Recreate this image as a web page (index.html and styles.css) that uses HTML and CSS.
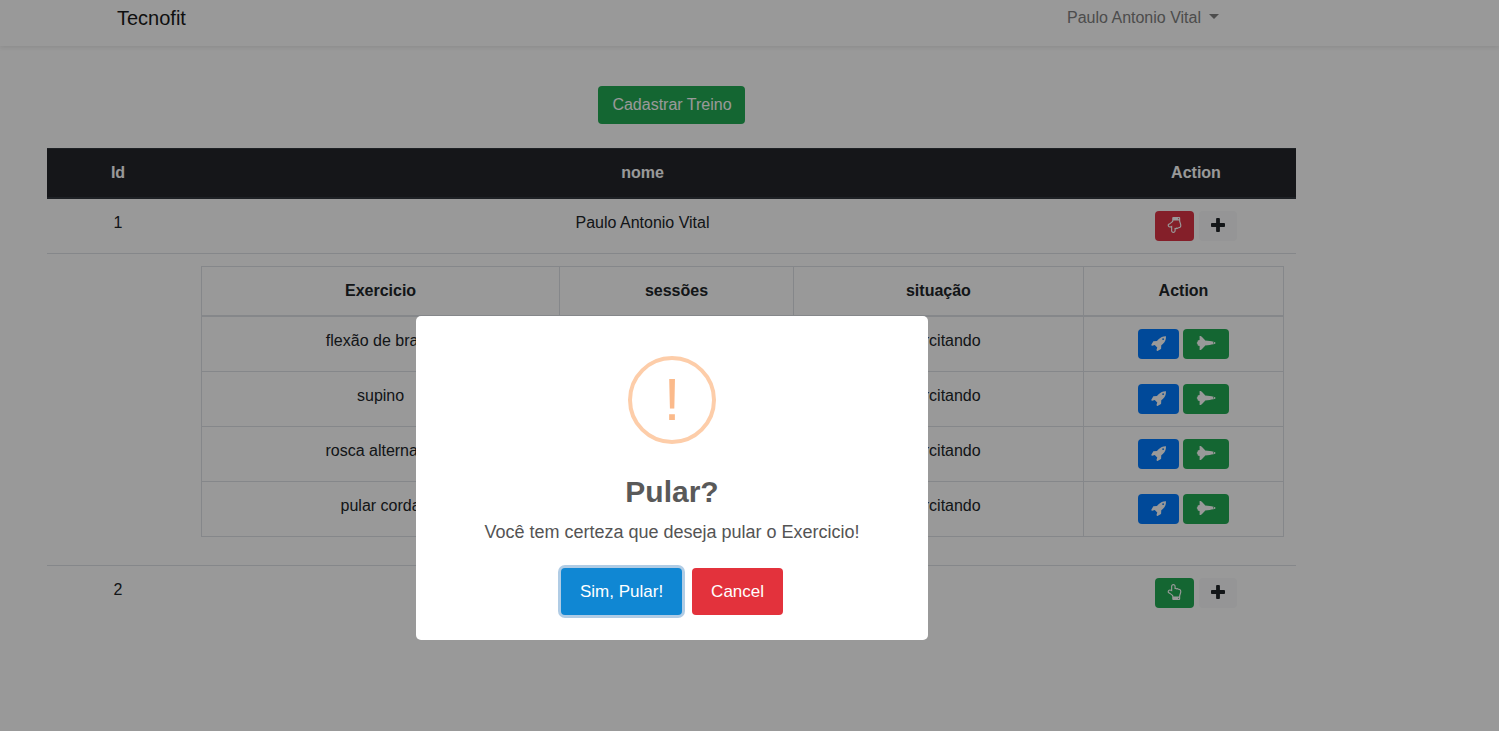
FILE: index.html
```html
<!DOCTYPE html>
<html lang="pt-BR">
<head>
<meta charset="utf-8">
<meta name="viewport" content="width=device-width, initial-scale=1">
<title>Tecnofit</title>
<link rel="stylesheet" href="styles.css">
</head>
<body>
<svg class="sprite" aria-hidden="true">
  <symbol id="plus" viewBox="0 0 1408 1408"><path d="M1408 608v192q0 40-28 68t-68 28H896v416q0 40-28 68t-68 28H608q-40 0-68-28t-28-68V896H96q-40 0-68-28T0 800V608q0-40 28-68t68-28h416V96q0-40 28-68t68-28h192q40 0 68 28t28 68v416h416q40 0 68 28t28 68z"/></symbol>
  <symbol id="hand" viewBox="128 0 1536 1792"><path d="M1408 1600q0-26-19-45t-45-19-45 19-19 45 19 45 45 19 45-19 19-45zm128-764q0-189-167-189-26 0-56 5-16-30-52.500-47.500t-73.500-17.500-69 18q-50-53-119-53-25 0-55.500 10t-47.500 25v-331q0-52-38-90t-90-38q-51 0-89.500 39t-38.500 89v576q-20 0-48.500-15t-55-33-68-33-84.500-15q-67 0-97.500 44.500t-30.500 115.500q0 24 139 90 44 24 65 37 64 40 145 112 81 71 106 101 57 69 57 140v32h640v-32q0-72 32-167t64-193.500 32-179.500zm128-5q0 133-69 322-59 164-59 223v288q0 53-37.500 90.500t-90.500 37.500h-640q-53 0-90.500-37.500t-37.500-90.500v-288q0-10-4.500-21.500t-14-23.500-18-22.500-22.500-24-21.500-20.500-21.500-19-17-14q-74-65-129-100-21-13-62-33t-72-37-63-40.500-49.500-55-17.500-69.500q0-125 67-206.500t189-81.500q68 0 128 22v-374q0-104 76-180t179-76q105 0 181 75.500t76 180.500v169q62 4 119 37 21-3 43-3 101 0 178 60 139-1 219.500 85t80.500 227z"/></symbol>
  <symbol id="rocket" viewBox="0 96 1664 1664"><path d="M1440 448q0-40-28-68t-68-28-68 28-28 68 28 68 68 28 68-28 28-68zm224-288q0 249-75.500 430.500t-253.500 360.500q-81 80-195 176l-20 379q-2 16-16 26l-384 224q-7 4-16 4-12 0-23-9l-64-64q-13-14-8-32l85-276-281-281-276 85q-3 1-9 1-14 0-23-9l-64-64q-17-19-5-39l224-384q10-14 26-16l379-20q96-114 176-195 188-187 358-258t431-71q14 0 24 9.500t10 22.500z"/></symbol>
  <symbol id="shuttle" viewBox="0 0 20 14"><path d="M3.600 0h1.200c1.800 1.200 3.200 3 4.400 4.500 3.400.4 6 .7 8.200 1.200 1.400.3 2.200.8 2.200 1.300s-.8 1-2.200 1.300c-2.200.5-4.800.8-8.200 1.200C8 11 6.600 12.800 4.800 14H3.600V9.900L1.800 9.600 1.500 8 .6 7l.9-1 .3-1.600 1.800-.3zM17 6.300v1.400c.8-.1 1.100-.4 1.100-.7s-.3-.6-1.100-.7z" fill-rule="evenodd"/></symbol>
</svg>

<nav class="navbar">
  <div class="navbar-inner">
    <a class="brand" href="#">Tecnofit</a>
    <a class="user" href="#">Paulo Antonio Vital<span class="caret"></span></a>
  </div>
</nav>

<main class="content">
  <button class="btn btn-success" type="button">Cadastrar Treino</button>
  <table class="table workouts">
    <thead>
      <tr><th class="col-id">Id</th><th>nome</th><th class="col-action">Action</th></tr>
    </thead>
    <tbody>
      <tr>
        <td>1</td>
        <td>Paulo Antonio Vital</td>
        <td><div class="actions wide">
          <button class="btn-icon danger" type="button" aria-label="Desativar"><svg class="hand down"><use href="#hand"/></svg></button>
          <button class="btn-icon light" type="button" aria-label="Adicionar"><svg class="plus"><use href="#plus"/></svg></button>
        </div></td>
      </tr>
      <tr>
        <td></td>
        <td colspan="2">
          <table class="table exercises">
            <thead>
              <tr><th class="col-exercise">Exercicio</th><th class="col-sessions">sessões</th><th>situação</th><th class="col-action">Action</th></tr>
            </thead>
            <tbody>
              <tr><td>flexão de braço</td><td></td><td>Exercitando</td><td><div class="actions"><button class="btn-icon primary" type="button" aria-label="Finalizar"><svg class="rocket"><use href="#rocket"/></svg></button><button class="btn-icon success" type="button" aria-label="Pular"><svg class="shuttle"><use href="#shuttle"/></svg></button></div></td></tr>
              <tr><td>supino</td><td></td><td>Exercitando</td><td><div class="actions"><button class="btn-icon primary" type="button" aria-label="Finalizar"><svg class="rocket"><use href="#rocket"/></svg></button><button class="btn-icon success" type="button" aria-label="Pular"><svg class="shuttle"><use href="#shuttle"/></svg></button></div></td></tr>
              <tr><td>rosca alternada</td><td></td><td>Exercitando</td><td><div class="actions"><button class="btn-icon primary" type="button" aria-label="Finalizar"><svg class="rocket"><use href="#rocket"/></svg></button><button class="btn-icon success" type="button" aria-label="Pular"><svg class="shuttle"><use href="#shuttle"/></svg></button></div></td></tr>
              <tr><td>pular corda</td><td></td><td>Exercitando</td><td><div class="actions"><button class="btn-icon primary" type="button" aria-label="Finalizar"><svg class="rocket"><use href="#rocket"/></svg></button><button class="btn-icon success" type="button" aria-label="Pular"><svg class="shuttle"><use href="#shuttle"/></svg></button></div></td></tr>
            </tbody>
          </table>
        </td>
      </tr>
      <tr>
        <td>2</td>
        <td></td>
        <td><div class="actions wide">
          <button class="btn-icon success" type="button" aria-label="Ativar"><svg class="hand"><use href="#hand"/></svg></button>
          <button class="btn-icon light" type="button" aria-label="Adicionar"><svg class="plus"><use href="#plus"/></svg></button>
        </div></td>
      </tr>
    </tbody>
  </table>
</main>

<div class="backdrop">
  <div class="modal" role="dialog" aria-modal="true" aria-labelledby="modal-title">
    <div class="modal-icon" aria-hidden="true">!</div>
    <h2 class="modal-title" id="modal-title">Pular?</h2>
    <p class="modal-text">Você tem certeza que deseja pular o Exercicio!</p>
    <div class="modal-actions">
      <button class="modal-btn confirm" type="button">Sim, Pular!</button>
      <button class="modal-btn cancel" type="button">Cancel</button>
    </div>
  </div>
</div>
</body>
</html>
```
FILE: styles.css
```css
* { box-sizing: border-box; }

:root { --gutter-right: 155px; }

body {
  margin: 0;
  font: 16px/24px "Liberation Sans", Arial, sans-serif;
  color: #212529;
  background: #fff;
  overflow: hidden;
}

button { font-family: inherit; cursor: pointer; }

.sprite { display: none; }

.navbar {
  height: 46px;
  padding: 0 var(--gutter-right) 0 0;
  background: #fff;
  box-shadow: 0 2px 4px rgba(0, 0, 0, .075);
}

.navbar-inner {
  display: flex;
  justify-content: space-between;
  max-width: 1140px;
  margin: 0 auto;
  padding: 5px 23px 0 15px;
}

.brand { font-size: 20px; line-height: 26px; color: #1a1a1a; text-decoration: none; }

.user {
  display: flex;
  align-items: center;
  gap: 8px;
  color: #808080;
  text-decoration: none;
}

.caret {
  margin-bottom: 4px;
  border: 5px solid transparent;
  border-top-color: currentColor;
  border-bottom: 0;
}

.content {
  display: flex;
  flex-direction: column;
  align-items: center;
  gap: 24px;
  margin-right: var(--gutter-right);
  padding: 40px 48px 0 47px;
}

.btn {
  height: 38px;
  padding: 0 13px 0 14px;
  border: 0;
  border-radius: 4px;
  font-size: 16px;
  color: #fff;
}

.btn-success, .success { background: #22aa54; }
.danger { background: #dc3545; }
.primary { background: #007bff; }
.light { background: #f8f9fa; }

.table {
  width: 100%;
  table-layout: fixed;
  border-collapse: collapse;
  text-align: center;
}

.table th, .table td {
  padding: 12px;
  vertical-align: top;
  border-top: 1px solid #dee2e6;
}

.workouts > thead th {
  color: #fff;
  background: #23262b;
  border-top: 1px solid #32383e;
  border-bottom: 2px solid #32383e;
}

.col-id { width: 142px; }
.col-action { width: 200px; }
.col-exercise { width: 33.1%; }
.col-sessions { width: 21.6%; }

.table.exercises { margin-bottom: 16px; }
.exercises th, .exercises td { border: 1px solid #dee2e6; }
.exercises thead th { border-bottom-width: 2px; }

.actions { display: flex; justify-content: center; gap: 4px; }
.actions.wide { gap: 5px; }

.btn-icon {
  display: flex;
  align-items: center;
  height: 30px;
  padding: 0 13px 2px;
  border: 0;
  border-radius: 4px;
  color: #fff;
}

.wide .btn-icon { padding: 0 12px 2px; }

.btn-icon.light { color: #212529; }
.btn-icon svg { fill: currentColor; }
.hand { width: 15px; height: 16px; }
.down { transform: scaleY(-1); }
.plus { width: 14px; height: 14px; }
.rocket { width: 15px; height: 15px; }
.shuttle { width: 20px; height: 14px; }

.backdrop {
  position: fixed;
  inset: 0;
  display: flex;
  justify-content: center;
  align-items: flex-start;
  padding: 316px var(--gutter-right) 0 0;
  background: rgba(0, 0, 0, .4);
}

.modal {
  display: flex;
  flex-direction: column;
  align-items: center;
  width: 512px;
  padding: 40px 20px 25px;
  border-radius: 5px;
  background: #fff;
}

.modal-icon {
  width: 88px;
  height: 88px;
  border: 4px solid #fdcda9;
  border-radius: 50%;
  font-size: 60px;
  line-height: 80px;
  text-align: center;
  color: #fbba8b;
}

.modal-title {
  margin: 30px 0 0;
  font-size: 30px;
  line-height: 36px;
  color: #595959;
}

.modal-text {
  margin: 10px 0 0;
  font-size: 18px;
  line-height: 24px;
  color: #545454;
}

.modal-actions { display: flex; gap: 10px; margin-top: 24px; }

.modal-btn {
  height: 47px;
  padding: 0 19px;
  border: 0;
  border-radius: 4px;
  font-size: 17px;
  color: #fff;
}

.confirm { background: #1087d3; box-shadow: 0 0 0 3px #b0cce5; }
.cancel { background: #e3323c; }
```
